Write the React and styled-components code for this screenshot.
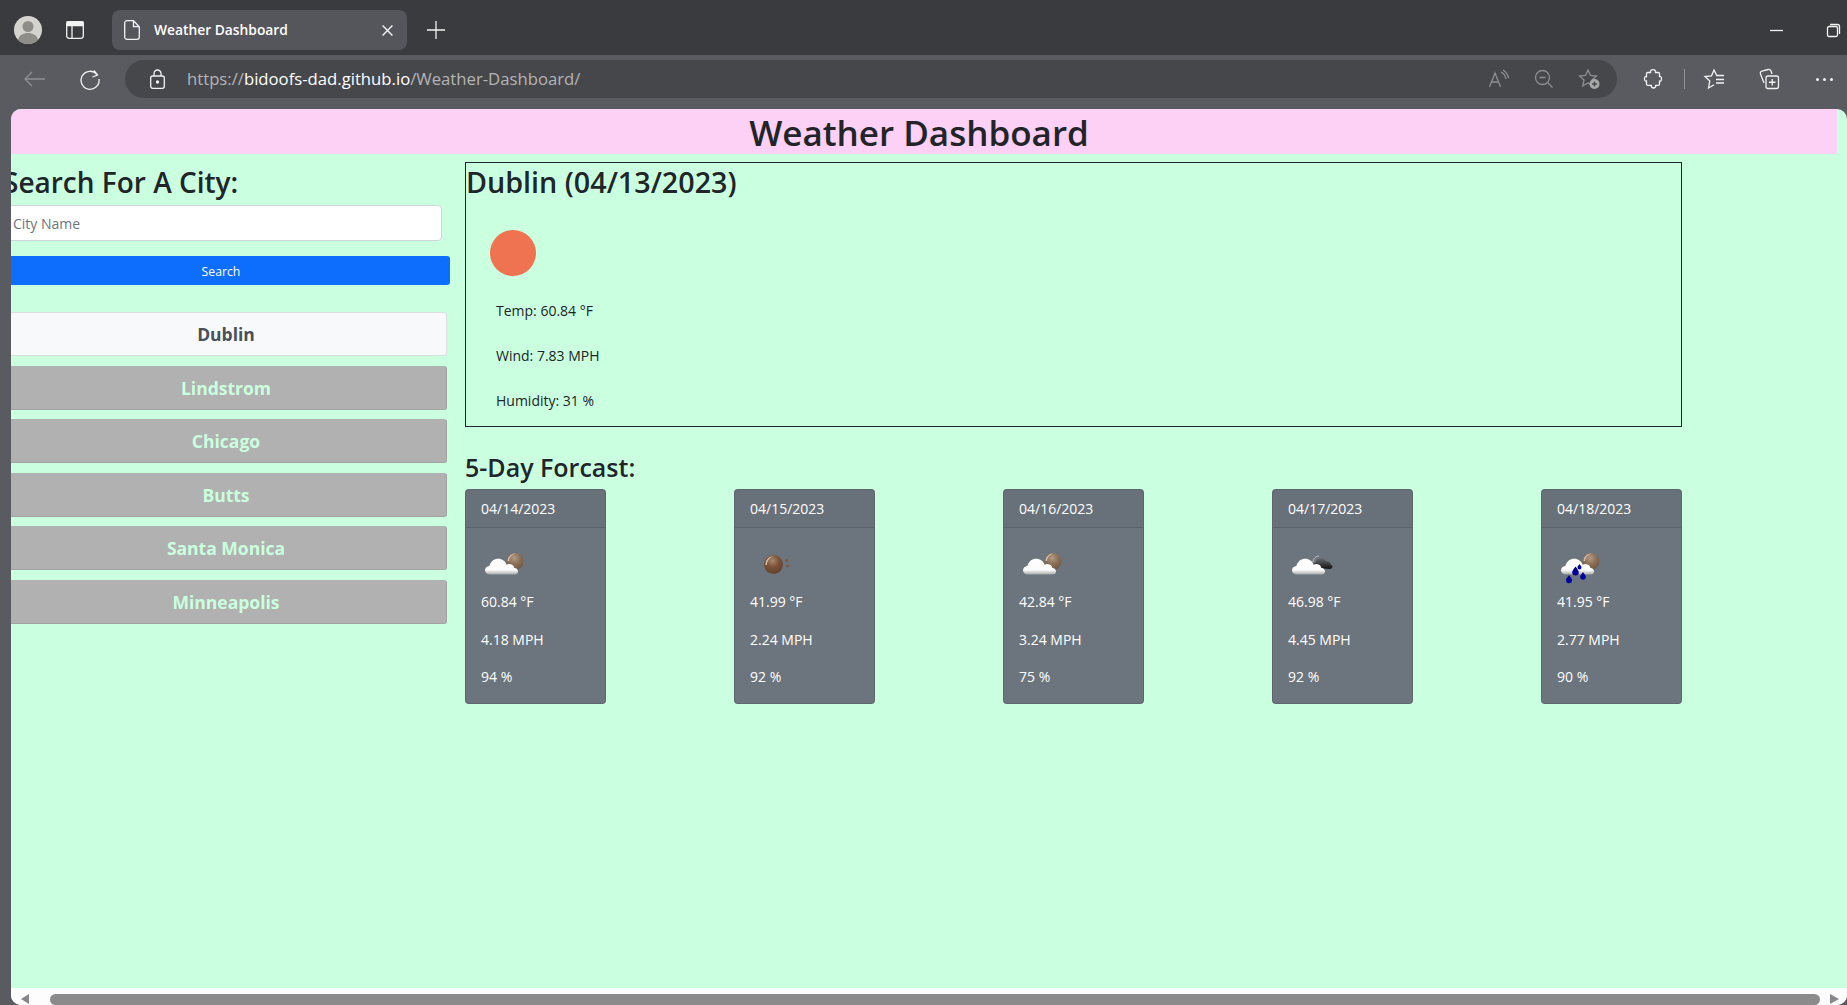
import styled, { createGlobalStyle } from 'styled-components';

const cities = ['Lindstrom', 'Chicago', 'Butts', 'Santa Monica', 'Minneapolis'];

const forecast = [
  { date: '04/14/2023', icon: 'cloudSun', temp: '60.84 °F', wind: '4.18 MPH', humidity: '94 %' },
  { date: '04/15/2023', icon: 'sun', temp: '41.99 °F', wind: '2.24 MPH', humidity: '92 %' },
  { date: '04/16/2023', icon: 'cloudSun', temp: '42.84 °F', wind: '3.24 MPH', humidity: '75 %' },
  { date: '04/17/2023', icon: 'cloudDark', temp: '46.98 °F', wind: '4.45 MPH', humidity: '92 %' },
  { date: '04/18/2023', icon: 'rain', temp: '41.95 °F', wind: '2.77 MPH', humidity: '90 %' },
];

const CLOUD = 'M8 35.500c-3 0-5-1.900-5-4.300 0-2.400 1.900-4.200 4.400-4.300 1-4.600 5-7.200 8.800-7.200 4 0 7.200 2.400 8.400 6 1-.5 2.100-.7 3.200-.6 2.500.2 4.300 1.900 4.600 4 2.200.2 3.600 1.700 3.600 3.300 0 1.800-1.300 3.100-3.500 3.100z';

const WeatherIcon = ({ kind }) => (
  <WeatherSvg viewBox="0 0 50 50">
    {kind === 'sun' && (
      <>
        <circle cx="22.500" cy="25.500" r="9.500" fill="url(#brownBall)" />
        <path d="M14.500 26c-.4-4.600 3.200-8.800 8-8.800-3.200 1-6.600 4-6.600 8.800z" fill="#d9c4b1" />
        <circle cx="35.500" cy="21.500" r="1.300" fill="#7b5237" />
        <circle cx="36.500" cy="27" r="1.300" fill="#7b5237" />
      </>
    )}
    {(kind === 'cloudSun' || kind === 'rain') && (
      <>
        <circle cx="33" cy="22.500" r="8.500" fill="url(#fadedBall)" />
        <path d="M25.500 22c.4-4 3.800-7.400 8-7.400-3.200.8-6 3.400-6.600 7.400z" fill="#d9c4b1" />
      </>
    )}
    {kind === 'cloudDark' && (
      <>
        <path d="M24 23c.4-3.400 2.800-6 6-6" fill="none" stroke="#c4c6c8" strokeWidth="1" />
        <path d="M27 29c-2 0-3-1.400-3-2.800 0-1.600 1.200-2.700 2.800-2.800.6-3 3-4.400 5.200-4.400 2.400 0 4.300 1.400 5 3.400 2.800-.4 4.400 1.200 4.700 3 .9.200 1.800 1 1.800 2 0 1.200-1 2.600-2.600 2.600z" fill="url(#darkCloud)" />
      </>
    )}
    {kind !== 'sun' && <path d={CLOUD} fill="url(#whiteCloud)" />}
    {kind === 'rain' && (
      <g fill="#00009a">
        <path d="M11 36c2.200 3 3 4 3 5.300a3 3 0 0 1-6 0c0-1.300.800-2.300 3-5.300z" />
        <path d="M17.500 27.500c2.400 3.300 3.300 4.500 3.300 5.800a3.300 3.300 0 0 1-6.600 0c0-1.300.900-2.500 3.300-5.800z" />
        <path d="M21.500 25c1.300 1.900 2 2.600 2 3.500a2 2 0 0 1-4 0c0-.9.700-1.600 2-3.500z" />
        <path d="M25 33c2.200 3 2.800 3.800 2.800 5a2.800 2.800 0 0 1-5.600 0c0-1.200.600-2 2.800-5z" />
      </g>
    )}
  </WeatherSvg>
);

const App = () => {
  return (
    <Window>
      <GlobalStyle />
      <HiddenDefs aria-hidden="true">
        <defs>
          <radialGradient id="brownBall" cx="45%" cy="30%" r="75%">
            <stop offset="0" stopColor="#a98a6f" />
            <stop offset="0.45" stopColor="#7b5237" />
            <stop offset="1" stopColor="#5e3f2b" />
          </radialGradient>
          <radialGradient id="fadedBall" cx="45%" cy="30%" r="75%">
            <stop offset="0" stopColor="#b09a86" />
            <stop offset="0.5" stopColor="#8a6e56" />
            <stop offset="1" stopColor="#6e5440" />
          </radialGradient>
          <linearGradient id="whiteCloud" x1="0" y1="0" x2="0" y2="1">
            <stop offset="0" stopColor="#ffffff" />
            <stop offset="0.72" stopColor="#fbfbfb" />
            <stop offset="1" stopColor="#a9a9a9" />
          </linearGradient>
          <linearGradient id="darkCloud" x1="0" y1="0" x2="0" y2="1">
            <stop offset="0" stopColor="#6b6c6e" />
            <stop offset="1" stopColor="#141414" />
          </linearGradient>
        </defs>
      </HiddenDefs>

      <TabStrip>
        <Avatar viewBox="0 0 28 28">
          <circle cx="14" cy="14" r="14" fill="#d5d3cd" />
          <circle cx="14" cy="10.500" r="5.500" fill="#8f8d88" />
          <path d="M4 24c1-5 5-7 10-7s9 2 10 7c-2.800 2.600-6.200 4-10 4s-7.200-1.400-10-4z" fill="#8f8d88" />
        </Avatar>
        <ChromeIcon $w={18} $ml={24} viewBox="0 0 18 18">
          <rect x=".7" y=".7" width="16.600" height="16.600" rx="2.500" />
          <path d="M1 1h16v3.500H1z" fill="#f2f2f2" />
          <path d="M6 4.500V17" />
        </ChromeIcon>
        <Tab>
          <ChromeIcon $w={16} viewBox="0 0 16 20">
            <path d="M3 .7h6.500l5.800 6V17a2.300 2.300 0 0 1-2.300 2.300H3A2.300 2.300 0 0 1 .7 17V3A2.300 2.300 0 0 1 3 .7zM9.500.7v6h5.800" />
          </ChromeIcon>
          <TabTitle>Weather Dashboard</TabTitle>
          <ChromeIcon $w={11} viewBox="0 0 10 10">
            <path d="M.5.500l9 9M9.500.500l-9 9" />
          </ChromeIcon>
        </Tab>
        <ChromeIcon $w={18} $ml={20} viewBox="0 0 18 18">
          <path d="M9 0v18M0 9h18" />
        </ChromeIcon>
        <WindowControls>
          <ChromeIcon $w={13} viewBox="0 0 13 13">
            <path d="M0 6.500h13" />
          </ChromeIcon>
          <ChromeIcon $w={13} viewBox="0 0 13 13">
            <rect x=".5" y="2.500" width="10" height="10" rx="1.500" />
            <path d="M3 .5h7.500a2 2 0 0 1 2 2V10" />
          </ChromeIcon>
        </WindowControls>
      </TabStrip>

      <Toolbar>
        <ChromeIcon $w={21} $dim viewBox="0 0 21 16">
          <path d="M21 8H1M8 1L1 8l7 7" />
        </ChromeIcon>
        <ChromeIcon $w={20} $ml={35} viewBox="0 0 20 20">
          <path d="M17 5.500A9 9 0 1 0 19 10M14 1.500l3.500 4.500-5 2" />
        </ChromeIcon>
        <AddressBar>
          <ChromeIcon $w={15} viewBox="0 0 15 20">
            <rect x=".7" y="7" width="13.600" height="12.300" rx="2" />
            <path d="M4 7V4.500a3.500 3.500 0 0 1 7 0V7" />
            <circle cx="7.500" cy="13" r="1" fill="#f2f2f2" />
          </ChromeIcon>
          <Url>
            https://<strong>bidoofs-dad.github.io</strong>/Weather-Dashboard/
          </Url>
          <AddressActions>
            <ChromeIcon $w={20} $dim viewBox="0 0 20 18">
              <path d="M.5 17L6 3l5.500 14M2.500 12h7M12 2c3 1.500 4.500 4 5 7M14 0c3 2 5 4.500 5.500 8" />
            </ChromeIcon>
            <ChromeIcon $w={18} $dim viewBox="0 0 18 18">
              <circle cx="7.500" cy="7.500" r="7" />
              <path d="M4.500 7.500h6M12.500 12.500l5 5" />
            </ChromeIcon>
            <ChromeIcon $w={21} $dim viewBox="0 0 21 20">
              <path d="M9 1l2.500 5.500 6 .6-4.500 4 1.300 6L9 14l-5.300 3 1.300-6-4.500-4 6-.6z" />
              <circle cx="15.500" cy="15" r="5" fill="#a9a9a9" stroke="none" />
              <path d="M15.500 12.500v5M13 15h5" stroke="#46474b" />
            </ChromeIcon>
          </AddressActions>
        </AddressBar>
        <ChromeIcon $w={18} $ml={27} viewBox="0 0 18 20">
          <path d="M6.500 3.500C6 1.500 7.500.7 9 .7s3 .8 2.500 2.800h2.800c.8 0 1.200.5 1.200 1.200v2.800c1.700-.4 2 1 2 2.300s-.3 2.700-2 2.300v2.800c0 .8-.5 1.400-1.200 1.400h-2.600c.4 1.800-1 2.700-2.200 2.700s-2.600-.9-2.200-2.700H3.800c-.8 0-1.300-.6-1.300-1.400V12c-1.500.4-2-.9-2-2.200s.5-2.600 2-2.200V4.700c0-.7.500-1.200 1.300-1.200z" />
        </ChromeIcon>
        <ToolbarDivider />
        <ChromeIcon $w={20} viewBox="0 0 20 20">
          <path d="M20 6.500h-7.200L10 1 7.500 6.800 1 7.500l4.800 4.400L4.500 19l5.500-3.200M12 10.500h8M12 14h8" />
        </ChromeIcon>
        <ChromeIcon $w={20} $ml={35} viewBox="0 0 20 20">
          <path d="M5 14L1.500 5C1 3.500 1.500 2.500 3 2l6-1.500c1.500-.3 2.500.3 3 1.500l1 3" />
          <rect x="7" y="7" width="12.500" height="12.500" rx="2" />
          <path d="M13.250 10v6.500M10 13.250h6.500" />
        </ChromeIcon>
        <ThreeDots>
          <i />
          <i />
          <i />
        </ThreeDots>
      </Toolbar>

      <Page>
        <PageBody>
          <TitleBanner>Weather Dashboard</TitleBanner>
          <Columns>
            <Sidebar>
              <SideHeading>Search For A City:</SideHeading>
              <CityInput placeholder="City Name" readOnly />
              <SearchButton>Search</SearchButton>
              <CityList>
                <CityItem $active>Dublin</CityItem>
                {cities.map((city) => (
                  <CityItem key={city}>{city}</CityItem>
                ))}
              </CityList>
            </Sidebar>

            <MainColumn>
              <CurrentBox>
                <CurrentHeading>Dublin (04/13/2023)</CurrentHeading>
                <SunIcon viewBox="0 0 46 46">
                  <circle cx="23" cy="23" r="23" fill="#ef7351" />
                </SunIcon>
                <CurrentStat>Temp: 60.84 °F</CurrentStat>
                <CurrentStat>Wind: 7.83 MPH</CurrentStat>
                <CurrentStat>Humidity: 31 %</CurrentStat>
              </CurrentBox>

              <ForecastHeading>5-Day Forcast:</ForecastHeading>
              <ForecastRow>
                {forecast.map((day) => (
                  <Card key={day.date}>
                    <CardHeader>{day.date}</CardHeader>
                    <CardBody>
                      <WeatherIcon kind={day.icon} />
                      <CardText>{day.temp}</CardText>
                      <CardText>{day.wind}</CardText>
                      <CardText>{day.humidity}</CardText>
                    </CardBody>
                  </Card>
                ))}
              </ForecastRow>
            </MainColumn>
          </Columns>
        </PageBody>

        <Scrollbar>
          <ArrowLeft />
          <ScrollThumb />
          <ArrowRight />
        </Scrollbar>
      </Page>
    </Window>
  );
};

export default App;

const GlobalStyle = createGlobalStyle`
  html, body {
    margin: 0;
    padding: 0;
    height: 100%;
    overflow: hidden;
  }

  * {
    box-sizing: border-box;
  }
`;

const Window = styled.div`
  width: 1847px;
  height: 1005px;
  display: flex;
  flex-direction: column;
  overflow: hidden;
  background: #5a5b60;
  font-family: 'Open Sans', 'Noto Sans', sans-serif;
  color: #212529;
`;

const HiddenDefs = styled.svg`
  width: 0;
  height: 0;
  display: block;
`;

const TabStrip = styled.div`
  height: 55px;
  flex: none;
  display: flex;
  align-items: center;
  padding: 5px 0 0 14px;
  background: #3a3b3f;
`;

const Avatar = styled.svg`
  width: 28px;
  height: 28px;
  flex: none;
`;

const ChromeIcon = styled.svg`
  width: ${(props) => props.$w}px;
  flex: none;
  margin-left: ${(props) => props.$ml || 0}px;
  fill: none;
  stroke: ${(props) => (props.$dim ? '#8e8f92' : '#f2f2f2')};
  stroke-width: 1.3;
  overflow: visible;
`;

const Tab = styled.div`
  width: 295px;
  height: 40px;
  margin-left: 28px;
  padding: 0 14px 0 12px;
  display: flex;
  align-items: center;
  border-radius: 8px;
  background: #55565b;
`;

const TabTitle = styled.span`
  flex: 1;
  margin: 0 0 2px 14px;
  font-size: 13.8px;
  font-weight: 600;
  color: #fff;
  white-space: nowrap;
`;

const WindowControls = styled.div`
  margin-left: auto;
  margin-right: 7px;
  display: flex;
  align-items: center;
  gap: 44px;
`;

const Toolbar = styled.div`
  height: 54px;
  flex: none;
  display: flex;
  align-items: center;
  padding: 0 14px 6px 24px;
`;

const AddressBar = styled.div`
  width: 1493px;
  height: 38px;
  margin-left: 25px;
  padding: 0 17px 0 25px;
  display: flex;
  align-items: center;
  border-radius: 19px;
  background: #46474b;
`;

const Url = styled.span`
  margin: 0 0 2px 22px;
  font-size: 16.7px;
  color: #b4b5b7;
  white-space: nowrap;

  strong {
    font-weight: 400;
    color: #fff;
  }
`;

const AddressActions = styled.div`
  margin-left: auto;
  display: flex;
  align-items: center;
  gap: 26px;
`;

const ToolbarDivider = styled.div`
  width: 1px;
  height: 20px;
  margin: 0 19px 0 22px;
  background: #8e8f92;
`;

const ThreeDots = styled.div`
  margin-left: 37px;
  display: flex;
  gap: 4px;

  i {
    width: 3px;
    height: 3px;
    border-radius: 50%;
    background: #f2f2f2;
  }
`;

const Page = styled.main`
  flex: 1;
  min-height: 0;
  margin-left: 11px;
  display: flex;
  flex-direction: column;
  overflow: hidden;
  border-radius: 10px;
  background: #caffdf;
`;

const PageBody = styled.div`
  flex: 1;
  min-height: 0;
`;

const TitleBanner = styled.h1`
  height: 45px;
  margin: 0 10px 0 0;
  padding-right: 10px;
  font-size: 35px;
  font-weight: 600;
  line-height: 48px;
  text-align: center;
  background: #fdd0f5;
`;

const Columns = styled.div`
  display: flex;
  gap: 15px;
  padding-top: 8px;
`;

const Sidebar = styled.section`
  width: 450px;
  margin-left: -11px;
  flex: none;
`;

const SideHeading = styled.h3`
  height: 43px;
  margin: 0 0 0 3px;
  font-size: 28px;
  font-weight: 600;
  line-height: 40px;
  white-space: nowrap;
`;

const CityInput = styled.input`
  display: block;
  width: 442px;
  height: 36px;
  padding: 0 12px;
  font-family: inherit;
  font-size: 14px;
  border: 1px solid #ced4da;
  border-radius: 4px;
  outline: none;
  background: #fff;

  &::placeholder {
    color: #6c757d;
    opacity: 1;
  }
`;

const SearchButton = styled.button`
  display: block;
  width: 458px;
  height: 29px;
  margin: 15px 0 0 -8px;
  padding: 1px 0 0;
  font-family: inherit;
  font-size: 12.25px;
  color: #fff;
  border: 0;
  border-radius: 3px;
  background: #0d6efd;
`;

const CityList = styled.div`
  width: 442px;
  margin: 27px 0 0 5px;
  display: flex;
  flex-direction: column;
  gap: 9.5px;
`;

const CityItem = styled.div`
  height: 44px;
  display: flex;
  align-items: center;
  justify-content: center;
  font-size: 17.5px;
  font-weight: 700;
  color: ${(props) => (props.$active ? '#495057' : '#caffdf')};
  border: 1px solid ${(props) => (props.$active ? '#dcdee0' : '#a3a3a3')};
  border-top-color: ${(props) => (props.$active ? '#dcdee0' : '#b1b1b1')};
  background: ${(props) => (props.$active ? '#f8f9fa' : '#b1b1b1')};
  border-radius: 0 3px 3px 0;
`;

const MainColumn = styled.section`
  width: 1217px;
  flex: none;
`;

const CurrentBox = styled.div`
  height: 265px;
  border: 1px solid #212529;
`;

const CurrentHeading = styled.h2`
  height: 67px;
  margin: 0;
  font-size: 28.7px;
  font-weight: 600;
  line-height: 38px;
`;

const SunIcon = styled.svg`
  display: block;
  width: 46px;
  height: 46px;
  margin: 0 0 24px 24px;
`;

const CurrentStat = styled.p`
  margin: 0 0 24px 30px;
  font-size: 14px;
  line-height: 21px;
`;

const ForecastHeading = styled.h4`
  height: 62px;
  margin: 0;
  padding-top: 22px;
  font-size: 25px;
  font-weight: 600;
  line-height: 36px;
`;

const ForecastRow = styled.div`
  display: flex;
  justify-content: space-between;
`;

const Card = styled.article`
  width: 141px;
  height: 215px;
  color: #fff;
  border: 1px solid rgba(0, 0, 0, 0.125);
  border-radius: 4px;
  background: #6c757d;
`;

const CardHeader = styled.div`
  height: 38px;
  padding: 0 15px;
  font-size: 14px;
  line-height: 37px;
  border-bottom: 1px solid rgba(0, 0, 0, 0.125);
  background: rgba(0, 0, 0, 0.03);
`;

const CardBody = styled.div`
  padding: 11px 15px 0;
`;

const WeatherSvg = styled.svg`
  display: block;
  width: 50px;
  height: 50px;
  margin: 0 0 2px 1px;
`;

const CardText = styled.p`
  margin: 0 0 16.5px;
  font-size: 14px;
  line-height: 21px;
`;

const Scrollbar = styled.div`
  height: 17px;
  flex: none;
  display: flex;
  align-items: center;
  padding: 5px 8px 0 10px;
  background: #fdfdfd;
`;

const ArrowLeft = styled.span`
  width: 0;
  height: 0;
  border-style: solid;
  border-width: 5px 8px 5px 0;
  border-color: transparent #87868a transparent transparent;
`;

const ArrowRight = styled.span`
  width: 0;
  height: 0;
  border-style: solid;
  border-width: 5px 0 5px 9px;
  border-color: transparent transparent transparent #87868a;
`;

const ScrollThumb = styled.div`
  flex: 1;
  height: 11px;
  margin: 0 10px 0 21px;
  border-radius: 6px;
  background: #8b8b8b;
`;
